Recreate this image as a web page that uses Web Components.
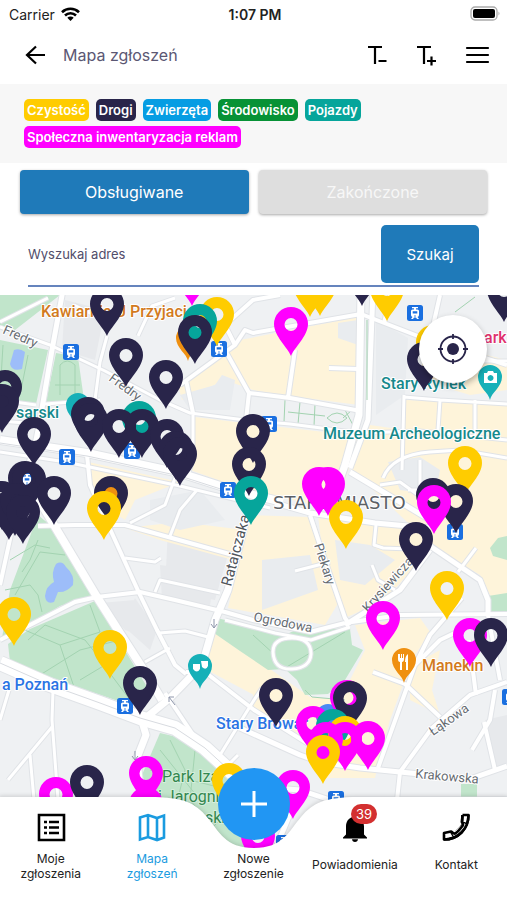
<!doctype html>
<html lang="pl">
<head>
    <meta charset="UTF-8">
    <meta name="viewport" content="width=device-width, initial-scale=1">
    <title>Mapa zgłoszeń</title>
    <style>
    html, body {
        height: 100%;
        margin: 0;
    }
    body {
        font-family: Inter, "Noto Sans", sans-serif;
        background: #fff;
        color: #000;
        --navy: #29254a;
        --blue: #1f7ab9;
    }
    </style>
</head>
<body>
<report-app></report-app>

<script type="text/javascript">

    const define = (name, html, setup) => {
        customElements.define(name, class extends HTMLElement {
            constructor () {
                super()
                const root = this.attachShadow({mode: 'open'})
                root.innerHTML = html
                if (setup) setup(root, this)
            }
        })
    }

    // system status bar
    define('status-bar', `
        <style>
        :host {
            display: grid;
            grid-template-columns: 1fr auto 1fr;
            align-items: center;
            height: 28px;
            padding: 0 6px 0 9px;
            font-size: 14px;
            color: #222;
        }
        .left { display: flex; align-items: center; gap: 6px; }
        b { font-weight: 600; }
        .right { display: flex; justify-content: flex-end; }
        </style>
        <span class="left">Carrier
            <svg width="19" height="14" viewBox="0 0 19 14" fill="none" stroke="#000" stroke-width="2.6">
                <path d="M1 5.2a12.3 12.3 0 0 1 17 0M4 8.5a8 8 0 0 1 11 0"/>
                <path d="M9.500 14 6.300 10.800a4.600 4.600 0 0 1 6.400 0z" fill="#000" stroke="none"/>
            </svg>
        </span>
        <b>1:07 PM</b>
        <span class="right">
            <svg width="31" height="16" viewBox="0 0 31 16">
                <rect x="1" y="1" width="26" height="13" rx="4" fill="#fff" stroke="#aaa" stroke-width="1.300"/>
                <rect x="3" y="3" width="22" height="9" rx="2" fill="#000"/>
                <path d="M28.500 5.500q2 2 0 4z" fill="#aaa"/>
            </svg>
        </span>`)

    // title row with the back arrow, text size buttons and menu
    define('top-bar', `
        <style>
        :host {
            display: flex;
            align-items: center;
            height: 54px;
            padding: 0 16px 2px 22px;
        }
        h1 {
            flex: 1;
            margin: 0 0 0 14px;
            font-size: 16px;
            font-weight: 400;
            color: #5b5773;
        }
        button {
            display: flex;
            padding: 0;
            border: 0;
            background: none;
        }
        .tools { display: flex; gap: 22px; }
        svg { fill: none; stroke: #000; stroke-width: 2.200; }
        </style>
        <button aria-label="Wstecz">
            <svg width="27" height="28" viewBox="0 0 27 28"><path d="M14 5.500 5 14l9 8.500M5 14h18"/></svg>
        </button>
        <h1><slot></slot></h1>
        <div class="tools">
            <button aria-label="Mniejszy tekst">
                <svg width="27" height="28" viewBox="0 0 27 28"><path d="M2 6h14M9 6v17M12.500 20h8"/></svg>
            </button>
            <button aria-label="Większy tekst">
                <svg width="27" height="28" viewBox="0 0 27 28"><path d="M2 6h14M9 6v17M12 20h9M16.500 15.500v9"/></svg>
            </button>
            <button aria-label="Menu">
                <svg width="27" height="28" viewBox="0 0 27 28" stroke-linecap="round"><path d="M3 7h21M3 14h21M3 21h21"/></svg>
            </button>
        </div>`)

    define('category-tag', `
        <style>
        :host {
            display: block;
            padding: 0 3px;
            border-radius: 5px;
            font-size: 13px;
            font-weight: 600;
            line-height: 22px;
            color: #fff;
        }
        </style>
        <slot></slot>`, (root, host) => {
        root.querySelector('style').textContent += `:host { background: ${host.getAttribute('color')}; }`
    })

    define('category-legend', `
        <style>
        :host {
            display: flex;
            flex-wrap: wrap;
            gap: 5px 7px;
            padding: 15px 24px;
            background: #f7f7f7;
        }
        </style>
        <slot></slot>`)

    define('state-tabs', `
        <style>
        :host {
            display: grid;
            grid-template-columns: 1fr 1fr;
            gap: 10px;
            padding: 7px 20px 11px;
        }
        button {
            height: 44px;
            border: 0;
            border-radius: 4px;
            background: #dedede;
            box-shadow: 0 1px 3px rgba(0, 0, 0, .35);
            font: 16px Inter, sans-serif;
            color: #f7f7f7;
        }
        .on { background: var(--blue); color: #fff; }
        </style>
        <button class="on">Obsługiwane</button>
        <button>Zakończone</button>`)

    define('address-search', `
        <style>
        :host { display: block; padding: 0 28px 8px; }
        form {
            display: flex;
            align-items: center;
            margin: 0;
            padding-bottom: 2px;
            border-bottom: 2px solid #6584bd;
        }
        input {
            flex: 1;
            min-width: 0;
            padding: 0;
            border: 0;
            outline: 0;
            background: none;
            font: 13px Inter, sans-serif;
            color: #514d6b;
        }
        input::placeholder { color: #514d6b; opacity: 1; }
        button {
            width: 98px;
            height: 58px;
            border: 0;
            border-radius: 5px;
            background: var(--blue);
            font: 15px Inter, sans-serif;
            color: #fff;
        }
        </style>
        <form>
            <input type="text" aria-label="Wyszukaj adres" placeholder="Wyszukaj adres">
            <button type="button">Szukaj</button>
        </form>`)

    // street width and centre line
    const ROADS = [
        [3, 'M0 322 48 298M0 400 36 405M45 404 100 400M0 421 38 424'],
        [5, 'M63 290 52 350 40 420 36 440 24 480'],
        [3, 'M0 327 50 345 105 371 160 400 190 413 253 421 290 424 360 433 420 431 507 440'],
        [3, 'M74 305 100 318M107 336 100 362 95 400M193 415 193 460 188 475M138 336 152 306 175 298'],
        [4, 'M180 385 235 345 245 330 253 333 361 314 423 338 507 365M235 345 225 325 253 300 280 295M225 350 249 393 246 420M186 380 193 413'],
        [4, 'M249 393 290 398 361 411M295 350 288 398M329 368 358 369M390 295 384 324M440 295 431 335'],
        [7, 'M361 290 359 415 345 465 338 485'],
        [5, 'M373 290 368 420 350 468'],
        [3, 'M404 395 402 470M404 397 440 400 438 430M440 400 507 404M470 361 507 361M475 400 475 435'],
        [8, 'M0 440 87 453 180 473 233 490 283 502'],
        [3, 'M0 452 66 462 180 486 270 508'],
        [5, 'M275 503 310 513 375 523 430 528M350 472 400 502 430 520'],
        [3, 'M383 478Q392 455 430 452L460 450 507 458M380 485 400 482 425 500M420 460v30h-12'],
        [5, 'M430 546 480 580 488 600 488 615M430 550 400 590 345 625'],
        [3, 'M376 525 374 545 383 548 410 549M295 571 330 562M372 565 378 580 395 590M476 548 458 572'],
        [8, 'M22 480 42 505 97 597 118 630 145 672 162 700'],
        [4, 'M38 526 75 525 125 525 233 555M87 455 90 485 115 540 140 595 157 630 175 665 186 674'],
        [4, 'M0 640 30 625 75 602 97 597 140 592 175 600 225 612 253 620 310 632 345 623M0 585 12 530'],
        [3, 'M175 478 165 505 130 523M197 490 180 510 170 536M125 558 155 562 161 558M155 592 160 580 220 593'],
        [7, 'M247 515 228 590 215 620 202 665 170 698 148 716'],
        [4, 'M310 515 325 560 345 618 350 625'],
        [3, 'M159 633 185 631 212 638M145 662 170 648'],
        [14, 'M0 663 50 685 100 703 140 718 175 728 205 748 240 780'],
        [7, 'M140 715 146 735 137 758 140 790'],
        [3, 'M53 690 52 720 58 800M52 727 8 780M30 755 34 800M0 720 9 690'],
        [4, 'M165 693 202 748M186 672 205 672 254 710 310 745'],
        [3, 'M220 755 254 700 262 688M220 755 228 765 238 755'],
        [5, 'M240 728 300 755 320 762 360 768 400 772 470 779 507 766'],
        [4, 'M345 623 400 615 507 614M462 598 430 635 415 665 378 768M373 672 405 684 440 717M415 665 440 640 465 628'],
        [4, 'M507 682 470 695 432 728 400 772 397 800M469 640 476 695M495 690 490 720 472 750M484 722 495 770M488 615 500 680'],
        [3, 'M273 652Q273 638 292 638T311 654Q310 668 292 669T273 652M225 620 275 633 311 640 350 627'],
        [5, 'M240 785 300 790 330 800 507 800M300 790 275 850 330 800'],
    ]

    // tip position and colour, drawn back to front
    const DARK = '#29254a', PINK = '#ff00ff', GOLD = '#ffcc00', TEAL = '#06a59b'
    const PINS = [
        [192, 306, PINK], [310, 317, GOLD], [320, 316, GOLD], [362, 306, DARK], [387, 321, GOLD], [504, 322, DARK],
        [107, 336, DARK], [217, 346, GOLD], [200, 353, TEAL], [291, 356, PINK], [195, 364, DARK],
        [433, 374, GOLD], [424, 391, DARK], [126, 387, DARK], [166, 409, DARK], [5, 419, DARK], [2, 433, DARK],
        [88, 446, DARK], [91, 452, DARK], [139, 450, TEAL], [119, 458, DARK], [142, 458, DARK], [253, 463, DARK],
        [34, 466, DARK], [167, 468, DARK], [176, 480, DARK], [180, 486, DARK], [465, 495, GOLD], [249, 496, DARK],
        [25, 510, DARK], [29, 511, DARK], [319, 516, PINK], [328, 516, PINK], [54, 525, DARK], [251, 525, TEAL],
        [111, 525, DARK], [433, 527, DARK], [456, 533, DARK], [434, 534, PINK],
        [2, 530, DARK], [15, 536, DARK], [9, 540, DARK], [17, 532, DARK], [23, 544, DARK], [104, 540, GOLD],
        [346, 549, GOLD], [416, 571, DARK],
        [447, 620, GOLD], [14, 646, GOLD], [383, 650, PINK], [470, 667, PINK], [491, 667, DARK], [110, 679, GOLD],
        [140, 715, DARK], [276, 727, DARK], [347, 729, PINK], [350, 730, DARK], [313, 755, PINK], [333, 758, TEAL],
        [345, 765, GOLD], [326, 771, PINK], [345, 771, PINK], [368, 770, PINK], [323, 784, GOLD],
        [146, 836, PINK], [146, 805, PINK], [229, 812, GOLD], [56, 826, PINK], [87, 814, DARK], [293, 819, PINK], [258, 868, PINK],
    ]
    const STOPS = [
        [71, 352], [219, 349], [67, 457], [132, 451], [228, 490], [269, 424], [415, 313],
        [455, 532], [125, 706], [510, 697], [336, 799], [284, 843], [27, 480],
    ]
    // small round markers of places: tip, colour
    const PLACES = [
        [188, 361, '#ef9010'], [78, 428, '#16b0b8'], [490, 400, '#16b0b8'], [111, 514, '#ef9010'],
        [200, 689, '#16b0b8'], [404, 683, '#ef9010'], [328, 739, '#4a8af4'],
    ]
    // x, baseline, angle, class, text
    const LABELS = [
        [41, 317, 0, 'food', 'Kawiarnia U Przyjaci'], [16, 418, 0, 'sight', 'sarski'],
        [381, 389, 0, 'sight', 'Stary Rynek'], [323, 439, 0, 'sight', 'Muzeum Archeologiczne'],
        [484, 343, 0, 'hotel', 'ark'], [273, 509, 0, 'area', 'STARE MIASTO'],
        [2, 333, 24, 'street', 'Fredry'], [108, 380, 36, 'street', 'Fredry'],
        [231, 587, -75, 'main', 'Ratajczaka'], [314, 545, 72, 'street', 'Piekary'],
        [368, 613, -48, 'street', 'Krysiewicza'], [253, 621, 11, 'street', 'Ogrodowa'],
        [422, 671, 0, 'food', 'Manekin'], [433, 736, -35, 'street', 'Łąkowa'],
        [415, 778, 5, 'street', 'Krakowska'], [2, 690, 0, 'shop', 'a Poznań'],
        [216, 729, 0, 'shop', 'Stary Browar'], [162, 782, 0, 'park', 'Park Iza'],
        [158, 802, 0, 'park', 'i Jarogni'], [205, 823, 0, 'park', 'ski'],
    ]

    define('city-map', `
        <style>
        :host { display: block; position: relative; overflow: hidden; background: #eff1f3; }
        svg.map { display: block; width: 100%; height: 100%; }
        text {
            font-family: Roboto, sans-serif;
            font-size: 16px;
            font-weight: 500;
            paint-order: stroke;
            stroke: #fff;
            stroke-width: 2px;
            stroke-linejoin: round;
        }
        .food { fill: #d27a20; }
        .sight { fill: #16898c; }
        .hotel { fill: #e0306c; }
        .shop { fill: #2a74e4; }
        .park { font-weight: 400; fill: #33874f; stroke: #d5efdc; }
        .street { font-size: 13px; font-weight: 400; fill: #666c72; }
        .main { font-size: 15px; font-weight: 400; fill: #50555b; }
        .area { font-family: "DejaVu Sans", sans-serif; font-size: 18px; font-weight: 400; fill: #5b6066; }
        button {
            position: absolute;
            top: 20px;
            right: 20px;
            display: flex;
            align-items: center;
            justify-content: center;
            width: 68px;
            height: 68px;
            padding: 0;
            border: 0;
            border-radius: 50%;
            background: #fff;
            box-shadow: 0 3px 6px rgba(0, 0, 0, .3);
        }
        </style>
        <svg class="map" viewBox="0 295 507 555" preserveAspectRatio="xMidYMin slice" role="img" aria-label="Mapa">
            <defs>
                <path id="pin" fill-rule="evenodd" d="M0 0C-3-8-17-20-17-32A17 17 0 0 1 17-32C17-20 3-8 0 0ZM0-38A6.500 6.500 0 1 0 0-25A6.500 6.500 0 1 0 0-38Z"/>
                <path id="place" d="M0 0C-1-7-12-13-12-23A12 12 0 0 1 12-23C12-13 1-7 0 0Z"/>
                <g id="stop">
                    <rect x="-8" y="-8" width="16" height="16" rx="2.500" fill="#1a6fe0"/>
                    <path fill="#fff" fill-rule="evenodd" d="M-3-6h6v1.200h-2v1.300h1.500q1.500 0 1.500 1.500v4q0 1.500-1.500 2l1.500 2h-2l-1-1.500h-2l-1 1.500h-2l1.500-2q-1.500-.5-1.500-2v-4q0-1.500 1.500-1.500h1.500v-1.300h-2zM-2.300-1.800v2.300h4.600v-2.300zM-.8 2.400h1.600v1h-1.600z"/>
                </g>
            </defs>
            <g fill="#e7e9ec">
                <path d="M65 300 105 310 95 360 62 350ZM168 528 230 548 215 600 165 590ZM100 603 135 600 153 640 125 630ZM160 565 215 572 210 605 162 600ZM485 720 507 715V765L495 768ZM135 598 157 630 150 650 122 625Z"/>
            </g>
            <g fill="#fef4da">
                <path d="M240 340 358 317 359 405 290 396 253 390 225 380 182 400 178 385Z"/>
                <path d="M195 417 253 424 360 436 345 480 338 510 283 498 235 486 190 470Z"/>
                <path d="M405 400 507 403V610L490 595 480 575 430 545 405 520 352 470 370 425 405 430Z"/>
                <path d="M425 340 507 360V390L470 395 420 380Z"/>
                <path d="M88 462 180 482 135 500 125 520 95 500ZM125 528 180 522 245 530 233 560 160 540Z"/>
                <path d="M245 515 310 517 340 600 325 625 228 608 240 555Z"/>
                <path d="M318 515 430 530 425 555 385 600 345 618 322 550Z"/>
                <path d="M213 632 254 660 254 695 207 670ZM253 657 290 683 310 697 340 700 365 650 355 625 420 618 430 632 412 660 390 720 378 765 375 778 320 778 310 740 253 708Z"/>
                <path d="M410 667 440 650 432 690 440 715 410 700Z"/>
            </g>
            <g fill="#e9ecef">
                <path d="M338 323 358 320V345L338 338ZM376 320 408 338 405 395 376 415ZM180 395 215 385 222 375 235 380 230 410 190 410ZM150 500 200 490 225 520 180 530 150 520ZM262 560 310 555 318 590 262 610ZM335 540 370 545 395 560 365 585 340 580ZM388 462 420 457 440 470 435 495 400 490Z"/>
            </g>
            <g fill="#c1e5cb">
                <path d="M0 295H60L15 330 0 325ZM0 340 48 350 36 404 0 400ZM56 353 78 357 84 400 46 402Z"/>
                <path d="M38 515 10 590 2 638 28 626 60 606 92 597 50 525Z"/>
                <path d="M95 601 30 629 8 644 10 662 80 688 130 705 152 695Z"/>
                <path d="M217 618 285 635 300 628 350 629 352 645 363 650 345 680 328 694 305 695 297 680 285 669 268 670 240 651 214 633Z"/>
                <path d="M160 733 190 740 230 778 254 850H170L142 775Z"/>
                <path d="M490 548 498 538 507 536V560L493 556ZM488 596 507 593V617L489 613ZM461 784H477V800H461Z"/>
            </g>
            <g fill="#9dbdf9">
                <path d="M14 350Q20 348 25 352L22 369Q12 372 10 364Z"/>
                <path d="M56 564Q62 560 66 567 75 575 73 585 66 593 58 592L54 602Q46 605 45 596 46 586 54 582 51 572 56 564Z"/>
            </g>
            <g fill="none" stroke="#a3d3b1">
                <path d="M10 560 35 545 50 548M15 595 40 552 65 555M5 590 30 585 38 595 42 612M38 540 30 560 22 572M20 628 60 645 100 632 90 605M28 640 45 625 85 640 105 665 80 680M40 675 80 650 120 640M100 660 130 700M60 645 75 690"/>
                <path d="M3 345 0 395M28 355 20 395M60 395V365q7-8 15 0v35M55 385h25"/>
                <path d="M285 400 284 422M300 402 298 424M315 404 314 426M288 412 325 416M327 418q10-10 20 0q-10 10-20 0M345 410l8 15M352 410l-9 8M253 635 275 655M285 668 345 632M305 690 312 697 345 700"/>
                <path d="M160 750 200 800M170 740 185 770 175 810M195 750 190 800 215 830M150 770 230 790M200 840 240 800M455 312 475 297"/>
            </g>
            <g id="roads" fill="none" stroke-linejoin="round"></g>
            <g fill="none" stroke="#d8dbe0">
                <path d="M0 663 50 685 100 703 140 718 175 728 205 748 240 780M0 443 87 456 180 476 233 493"/>
                <path stroke="#a3d3b1" d="M367 320V400"/>
                <path stroke="#8e96ab" d="M214 619v9m-3-4 3 4 3-4M175 705l-6-8m0 5v-5h5M135 751v9m-3-4 3 4 3-4"/>
            </g>
            <g id="places"></g>
            <g id="labels"></g>
            <g id="stops"></g>
            <g fill="#fff">
                <path d="M484 373h3l1-2h5l1 2h3v10h-13zM490.500 375a3 3 0 1 0 .1 0z" fill-rule="evenodd"/>
                <path d="M193 664h7v5q-3 5-7 0zM201 661h7v5q-2 5-6 1z"/>
                <path d="M398 654v5q0 3 2 3v8h2v-8q2 0 2-3v-5h-1v4h-1v-4h-1v4h-1v-4zM408 654q-3 2-3 8h1v8h2z"/>
            </g>
            <g id="pins"></g>
        </svg>
        <button aria-label="Moja lokalizacja">
            <svg width="32" height="32" viewBox="0 0 32 32" fill="none" stroke="#29254a" stroke-width="1.800">
                <circle cx="16" cy="16" r="12.500"/>
                <circle cx="16" cy="16" r="6" fill="#29254a" stroke="none"/>
                <path d="M16 1v5M16 26v5M1 16h5M26 16h5"/>
            </svg>
        </button>`, root => {
        const fill = (id, html) => { root.getElementById(id).innerHTML = html }
        fill('roads',
            ROADS.map(([w, d]) => `<path d="${d}" stroke="#e0e3e7" stroke-width="${w + 2}"/>`).join('') +
            ROADS.map(([w, d]) => `<path d="${d}" stroke="#fff" stroke-width="${w}"/>`).join(''))
        fill('places', PLACES.map(([x, y, c]) => `<use href="#place" x="${x}" y="${y}" fill="${c}"/>`).join(''))
        fill('labels', LABELS.map(([x, y, a, cls, t]) =>
            `<text class="${cls}" transform="translate(${x} ${y}) rotate(${a})">${t}</text>`).join(''))
        fill('stops', STOPS.map(([x, y]) => `<use href="#stop" x="${x}" y="${y}"/>`).join(''))
        fill('pins', PINS.map(([x, y, c]) => `<use href="#pin" x="${x}" y="${y}" fill="${c}"/>`).join(''))
    })

    define('nav-item', `
        <style>
        :host { flex: 1 1 0; min-width: 0; }
        a {
            display: flex;
            flex-direction: column;
            align-items: center;
            gap: 8px;
            font-size: 12px;
            line-height: 15px;
            text-align: center;
            text-decoration: none;
            color: inherit;
        }
        .icon { position: relative; display: flex; justify-content: center; width: 32px; height: 32px; }
        .label { display: flex; align-items: center; min-height: 26px; }
        </style>
        <a href="#">
            <span class="icon"><slot name="icon"></slot></span>
            <span class="label"><span><slot></slot></span></span>
        </a>`)

    // bottom navigation with a notch for the round button
    define('tab-bar', `
        <style>
        :host { display: block; position: relative; color: #222; }
        .back {
            position: absolute;
            inset: 0;
            display: flex;
            filter: drop-shadow(0 -1px 2px rgba(0, 0, 0, .15));
        }
        .back i { flex: 1; margin: 0 -1px; background: #fff; }
        nav { position: relative; display: flex; height: 103px; padding-top: 14px; box-sizing: border-box; }
        .active { color: #1a9be0; }
        .badge {
            position: absolute;
            top: -7px;
            left: 12px;
            width: 26px;
            border-radius: 10px;
            background: #d33030;
            font-size: 13px;
            line-height: 20px;
            text-align: center;
            color: #fff;
        }
        .add {
            position: absolute;
            left: 50%;
            top: -29px;
            display: flex;
            align-items: center;
            justify-content: center;
            width: 72px;
            height: 72px;
            margin-left: -36px;
            padding: 0;
            border: 0;
            border-radius: 50%;
            background: #2196f3;
        }
        </style>
        <div class="back">
            <i></i>
            <svg width="210" height="103" viewBox="0 0 210 103" fill="#fff">
                <path d="M0 0C35 0 46 6 58 20S76 51 105 51 140 34 152 20 175 0 210 0V103H0Z"/>
            </svg>
            <i></i>
        </div>
        <nav>
            <nav-item>
                <svg slot="icon" width="32" height="32" viewBox="0 0 32 32" fill="none" stroke="#000" stroke-width="2.600">
                    <path d="M4 4h25v25H4z"/><path d="M9 11h3M14 11h10M9 16.500h3M14 16.500h10M9 22h3M14 22h10"/>
                </svg>Moje<br>zgłoszenia
            </nav-item>
            <nav-item class="active">
                <svg slot="icon" width="32" height="32" viewBox="0 0 32 32" fill="none" stroke="currentColor" stroke-width="2.600">
                    <path d="M4 6.500 12 4l9 3 7-2.500v22L21 29l-9-3-8 2.500zM12 4v22M21 7v22"/>
                </svg>Mapa<br>zgłoszeń
            </nav-item>
            <nav-item>Nowe<br>zgłoszenie</nav-item>
            <nav-item>
                <svg slot="icon" width="32" height="32" viewBox="0 0 32 32">
                    <path d="M16 31c1.600 0 3-1.200 3-2.800h-6C13 29.800 14.400 31 16 31zM25 23.500v-8c0-5-2.500-8.500-6.800-9.600V5a2.200 2.200 0 0 0-4.400 0v.9C9.500 7 7 10.500 7 15.500v8l-3 3v1h24v-1z"/>
                </svg>
                <span slot="icon" class="badge">39</span>Powiadomienia
            </nav-item>
            <nav-item>
                <svg slot="icon" width="32" height="32" viewBox="0 0 32 32" fill="none" stroke="#000" stroke-width="2.600" stroke-linejoin="round">
                    <path d="M22.500 4H28.500C28.500 18 18 28.500 4 28.500V22L11 20.500 14 25.500M22.500 4 22 11 26.500 13.500M14 25.500Q22 21 26.500 13.500M11 20.500 13 22.500Q20 19 23.500 12"/>
                    <path d="M11.500 21.500 14 25.500Q22 21 26.500 13.500L22.500 11.500Q20.500 17.500 11.500 21.500" fill="#fff" stroke="none"/>
                    <path d="M22.500 4 22 11Q24 13.500 22 15.500 18 21 15 22.500 13.500 23 11 20.500M28.500 4C28.500 18 18 28.500 4 28.500"/>
                </svg>Kontakt
            </nav-item>
            <button class="add" aria-label="Dodaj zgłoszenie">
                <svg width="28" height="28" viewBox="0 0 28 28" stroke="#fff" stroke-width="3"><path d="M14 1v26M1 14h26"/></svg>
            </button>
        </nav>`)

    define('report-app', `
        <style>
        :host { display: flex; flex-direction: column; min-height: 100vh; }
        /* the map runs on under the notch of the tab bar */
        city-map { flex: 1 1 0; min-height: 300px; margin-bottom: -53px; }
        </style>
        <status-bar></status-bar>
        <top-bar>Mapa zgłoszeń</top-bar>
        <category-legend>
            <category-tag color="#ffcc00">Czystość</category-tag>
            <category-tag color="#29254a">Drogi</category-tag>
            <category-tag color="#069de3">Zwierzęta</category-tag>
            <category-tag color="#079236">Środowisko</category-tag>
            <category-tag color="#06a59b">Pojazdy</category-tag>
            <category-tag color="#ff00ff">Społeczna inwentaryzacja reklam</category-tag>
        </category-legend>
        <state-tabs></state-tabs>
        <address-search></address-search>
        <city-map></city-map>
        <tab-bar></tab-bar>`)

</script>
</body>
</html>
